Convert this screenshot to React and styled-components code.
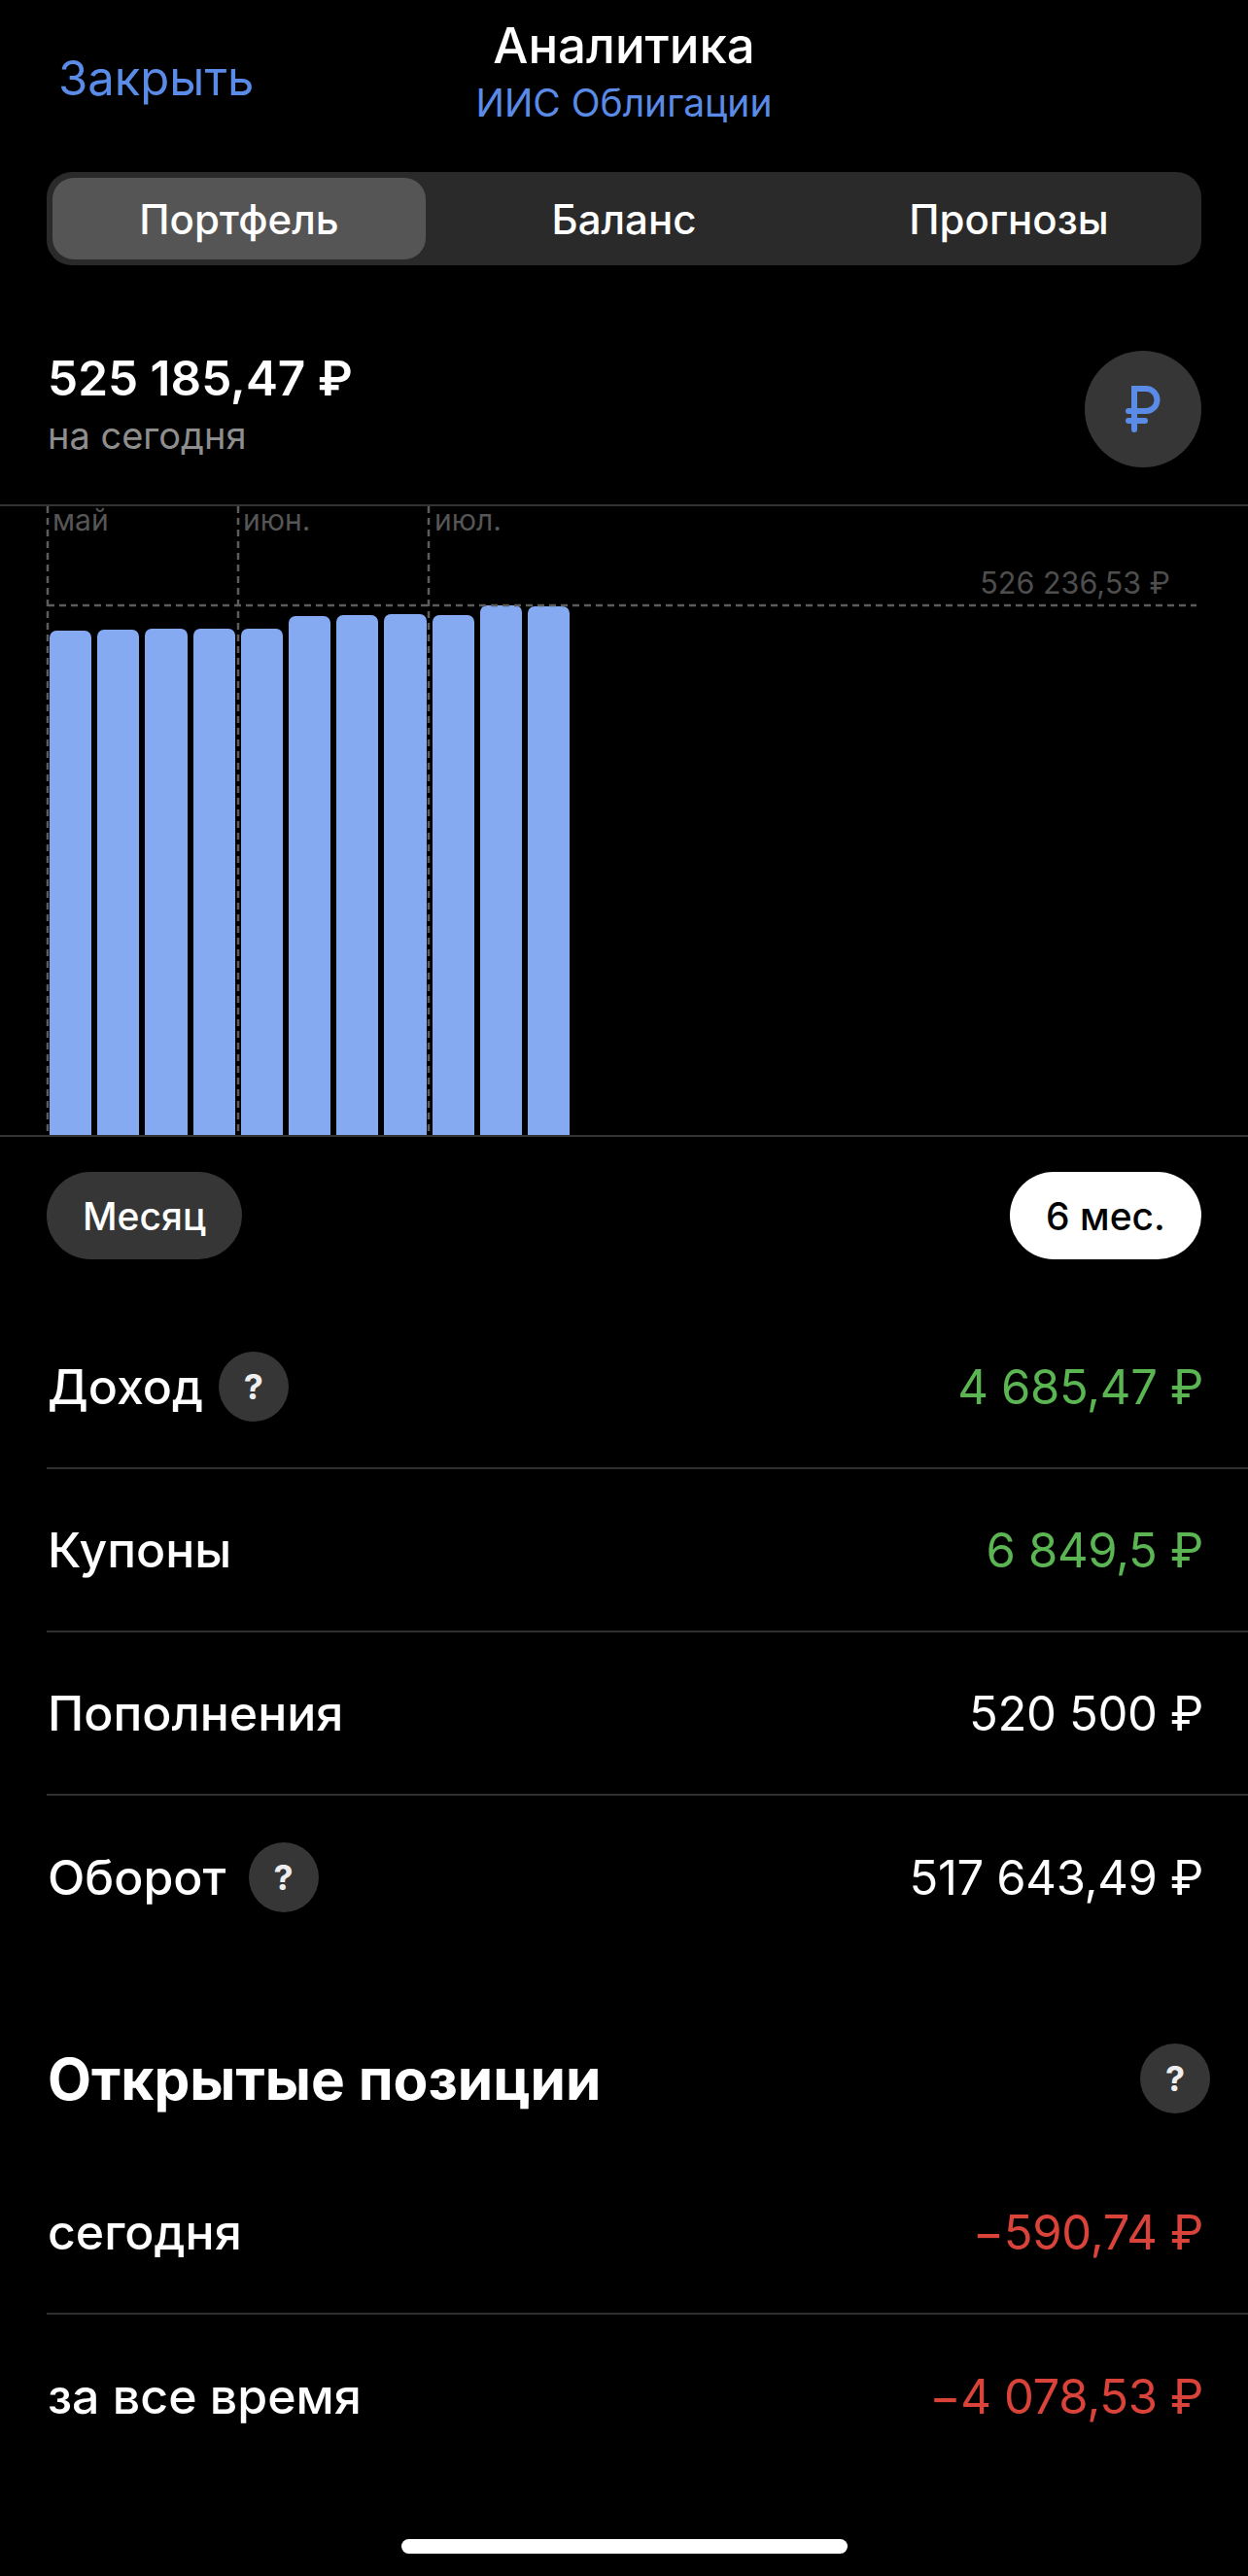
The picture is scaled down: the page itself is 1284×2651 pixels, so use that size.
import React from 'react';
import styled, { createGlobalStyle } from 'styled-components';

const GlobalStyle = createGlobalStyle`
  html, body {
    margin: 0;
    padding: 0;
    background: #000;
  }
  body {
    font-family: Inter, "Noto Sans", sans-serif;
    color: #fff;
  }
`;

const Page = styled.div`
  width: 1284px;
  height: 2651px;
  position: relative;
  overflow: hidden;
  background: #000;
`;

const Header = styled.header`
  height: 177px;
  position: relative;
  display: flex;
  flex-direction: column;
  align-items: center;
  box-sizing: border-box;
  padding-top: 17px;
`;

const Close = styled.div`
  position: absolute;
  left: 60px;
  top: 50px;
  font-size: 49px;
  line-height: 62px;
  color: #5a8be6;
`;

const Title = styled.div`
  font-size: 51px;
  line-height: 60px;
  font-weight: 500;
`;

const Subtitle = styled.div`
  font-size: 39px;
  line-height: 46px;
  margin-top: 6px;
  color: #5a8be6;
`;

const Tabs = styled.div`
  margin: 0 48px;
  height: 96px;
  box-sizing: border-box;
  padding: 6px;
  border-radius: 26px;
  background: #2a2a2a;
  display: grid;
  grid-template-columns: 384px 1fr 384px;
`;

const Tab = styled.div`
  display: flex;
  align-items: center;
  justify-content: center;
  border-radius: 22px;
  font-size: 42px;
  font-weight: 500;
  background: ${(p) => (p.$active ? '#555' : 'transparent')};
`;

const Summary = styled.section`
  height: 248px;
  box-sizing: border-box;
  padding: 88px 48px 0 49px;
  display: flex;
  justify-content: space-between;
  align-items: flex-start;
  border-bottom: 2px solid #333;
`;

const Amount = styled.div`
  font-size: 49.500px;
  line-height: 62px;
  font-weight: 600;
  margin-top: -3px;
`;

const AmountNote = styled.div`
  font-size: 38px;
  line-height: 46px;
  margin-top: 5px;
  color: #8e8e8e;
`;

const CurrencyBadge = styled.div`
  width: 120px;
  height: 120px;
  border-radius: 50%;
  background: #363636;
  display: flex;
  align-items: center;
  justify-content: center;
`;

const Chart = styled.section`
  height: 649px;
  position: relative;
  box-sizing: border-box;
  padding-left: 51px;
  display: flex;
  align-items: flex-end;
  gap: 6px;
  border-bottom: 2px solid #333;
`;

const Bar = styled.div`
  width: 43.2px;
  background: #85aaf2;
  border-radius: 7px 7px 0 0;
`;

const ChartGrid = styled.svg`
  position: absolute;
  left: 0;
  top: 0;
  pointer-events: none;
`;

const MonthLabel = styled.span`
  position: absolute;
  top: -3px;
  font-size: 30px;
  line-height: 34px;
  color: #565656;
`;

const MaxLabel = styled.span`
  position: absolute;
  right: 80px;
  top: 61px;
  font-size: 30.500px;
  line-height: 36px;
  color: #4e4e4e;
`;

const Periods = styled.div`
  display: flex;
  justify-content: space-between;
  padding: 36px 48px 48px;
`;

const Pill = styled.div`
  height: 90px;
  width: ${(p) => p.$width}px;
  border-radius: 45px;
  display: flex;
  align-items: center;
  justify-content: center;
  font-size: 39px;
  font-weight: 500;
  background: ${(p) => (p.$active ? '#fff' : '#363636')};
  color: ${(p) => (p.$active ? '#000' : '#fff')};
`;

const Row = styled.div`
  height: 168px;
  box-sizing: border-box;
  margin-left: 48px;
  padding: 0 46px 0 1px;
  display: flex;
  align-items: center;
  justify-content: space-between;
  border-bottom: ${(p) => (p.$last ? 'none' : '2px solid #2e2e2e')};
`;

const RowLabel = styled.div`
  display: flex;
  align-items: center;
  gap: ${(p) => p.$gap || 23}px;
  font-size: 50px;
  font-weight: 500;
`;

const RowValue = styled.div`
  font-size: 49px;
  letter-spacing: -0.35px;
  padding-top: 1px;
  color: ${(p) => p.$color || '#fff'};
`;

const Help = styled.span`
  width: 72px;
  height: 72px;
  border-radius: 50%;
  background: #363636;
  display: inline-flex;
  align-items: center;
  justify-content: center;
  font-size: 36px;
  font-weight: 700;
  color: #eee;
`;

const SectionHead = styled.div`
  margin: 69px 0 21px;
  height: 108px;
  padding: 0 39px 0 49px;
  display: flex;
  align-items: center;
  justify-content: space-between;
`;

const SectionTitle = styled.h2`
  margin: 0;
  font-size: 58.500px;
  font-weight: 700;
`;

const HomeBar = styled.div`
  position: absolute;
  left: 413px;
  bottom: 23px;
  width: 459px;
  height: 15px;
  border-radius: 8px;
  background: #fff;
`;

const barTops = [128, 127, 126, 126, 126, 113, 112, 111, 112, 102, 103];

const months = [
  { label: 'май', x: 54 },
  { label: 'июн.', x: 250 },
  { label: 'июл.', x: 447 },
];

function RubleIcon() {
  return (
    <svg width="36" height="48" viewBox="0 0 36 48" fill="none" stroke="#5a8be6" strokeWidth="6" strokeLinecap="round">
      <path d="M9 45V3h12a11.500 11.500 0 0 1 0 23H3" />
      <path d="M3 36h17" />
    </svg>
  );
}

export default function App() {
  return (
    <Page>
      <GlobalStyle />
      <Header>
        <Close>Закрыть</Close>
        <Title>Аналитика</Title>
        <Subtitle>ИИС Облигации</Subtitle>
      </Header>
      <Tabs>
        <Tab $active>Портфель</Tab>
        <Tab>Баланс</Tab>
        <Tab>Прогнозы</Tab>
      </Tabs>
      <Summary>
        <div>
          <Amount>525 185,47 ₽</Amount>
          <AmountNote>на сегодня</AmountNote>
        </div>
        <CurrencyBadge>
          <RubleIcon />
        </CurrencyBadge>
      </Summary>
      <Chart>
        {barTops.map((top, i) => (
          <Bar key={i} style={{ height: 647 - top }} />
        ))}
        <ChartGrid width="1284" height="647" viewBox="0 0 1284 647" fill="none" stroke="#5c5c5c" strokeWidth="2.5" strokeDasharray="7 5">
          <path d="M49 0V647M245 0V647M441 0V647" />
          <path d="M49 102H1231" />
        </ChartGrid>
        {months.map((m) => (
          <MonthLabel key={m.label} style={{ left: m.x }}>{m.label}</MonthLabel>
        ))}
        <MaxLabel>526 236,53 ₽</MaxLabel>
      </Chart>
      <Periods>
        <Pill $width={201}>Месяц</Pill>
        <Pill $width={197} $active>6 мес.</Pill>
      </Periods>
      <Row>
        <RowLabel $gap={16}>Доход <Help>?</Help></RowLabel>
        <RowValue $color="#5ab552">4 685,47 ₽</RowValue>
      </Row>
      <Row>
        <RowLabel>Купоны</RowLabel>
        <RowValue $color="#5ab552">6 849,5 ₽</RowValue>
      </Row>
      <Row>
        <RowLabel>Пополнения</RowLabel>
        <RowValue>520 500 ₽</RowValue>
      </Row>
      <Row $last>
        <RowLabel>Оборот <Help>?</Help></RowLabel>
        <RowValue>517 643,49 ₽</RowValue>
      </Row>
      <SectionHead>
        <SectionTitle>Открытые позиции</SectionTitle>
        <Help>?</Help>
      </SectionHead>
      <Row>
        <RowLabel>сегодня</RowLabel>
        <RowValue $color="#d9433a">−590,74 ₽</RowValue>
      </Row>
      <Row $last>
        <RowLabel>за все время</RowLabel>
        <RowValue $color="#d9433a">−4 078,53 ₽</RowValue>
      </Row>
      <HomeBar />
    </Page>
  );
}
